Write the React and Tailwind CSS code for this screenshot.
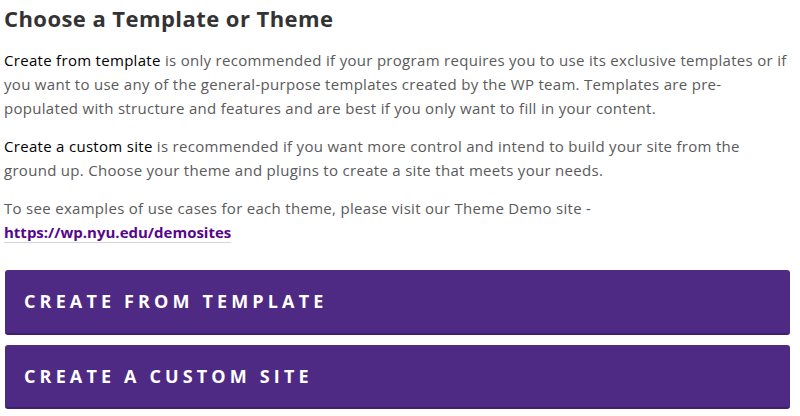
export default function App() {
  return (
    <div className="w-[800px] h-[416px] bg-white overflow-hidden" style={{ fontFamily: '"Open Sans", "Liberation Sans", sans-serif' }}>
      <div className="pl-[4px] pr-[10px]">
        <h2 className="text-[22px] leading-[28px] font-bold text-[#333333] pt-[4px] tracking-[0.02em]">Choose a Template or Theme</h2>
        <p className="mt-[16px] text-[15px] leading-[24px] text-[#5a5a5a] tracking-[0.02em]">
          <span className="text-black">Create from template</span> is only recommended if your program requires you to use its exclusive templates or if you want to use any of the general-purpose templates created by the WP team. Templates are pre-populated with structure and features and are best if you only want to fill in your content.
        </p>
        <p className="mt-[14px] text-[15px] leading-[24px] text-[#5a5a5a] tracking-[0.02em]">
          <span className="text-black">Create a custom site</span> is recommended if you want more control and intend to build your site from the ground up. Choose your theme and plugins to create a site that meets your needs.
        </p>
        <p className="mt-[14px] text-[15px] leading-[24px] text-[#5a5a5a] tracking-[0.02em]">
          To see examples of use cases for each theme, please visit our Theme Demo site -<br />
          <a href="#" className="font-bold text-[#57068c] border-b border-[#d4d4d4] tracking-normal">https://wp.nyu.edu/demosites</a>
        </p>
      </div>
      <div className="pl-[5px] pr-[10px] mt-[26px] flex flex-col gap-[10px]">
        <button className="h-[65px] w-full rounded-[3px] bg-[#4e2a84] border-b-2 border-[#3f1f70] text-left pl-[19px] text-white font-bold uppercase text-[18px] tracking-[0.23em]">Create from template</button>
        <button className="h-[64px] w-full rounded-[3px] bg-[#4e2a84] border-b-2 border-[#3f1f70] text-left pl-[19px] text-white font-bold uppercase text-[18px] tracking-[0.23em]">Create a custom site</button>
      </div>
    </div>
  );
}
